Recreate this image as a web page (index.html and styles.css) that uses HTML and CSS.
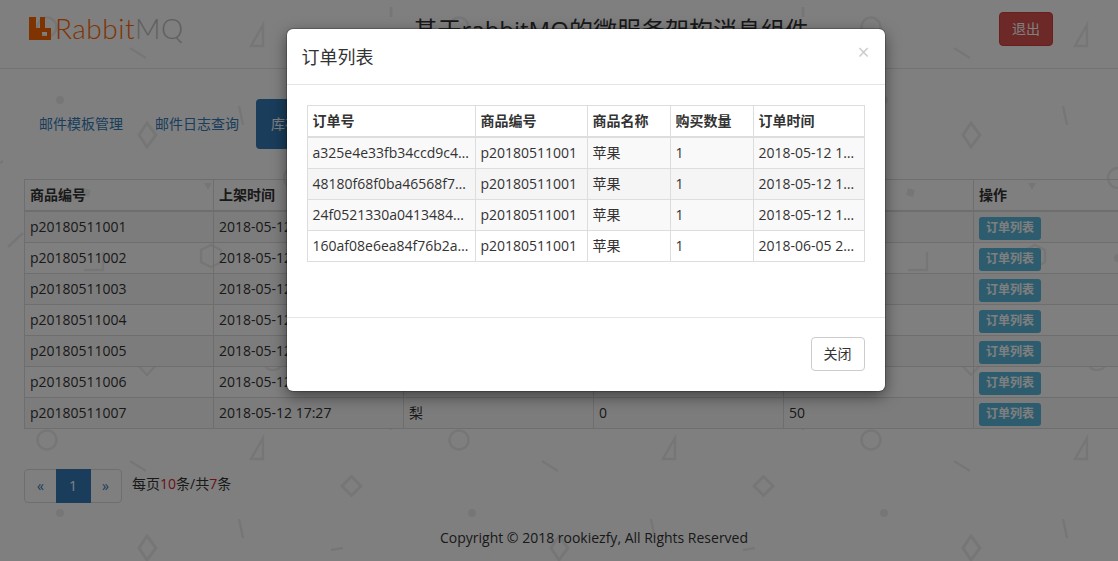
FILE: index.html
```html
<!DOCTYPE html>
<html lang="zh-CN">
<head>
<meta charset="utf-8">
<title>RabbitMQ</title>
<link rel="stylesheet" href="styles.css">
</head>
<body>
<div class="page">
  <header class="topbar">
    <div class="logo">
      <svg class="logo-mark" viewBox="0 0 22 23" width="22" height="23"><path fill-rule="evenodd" d="M0 0h7v11h4V0h5v11h6v12H0zM13 15v4h5v-4z"/></svg>
      <span class="logo-rabbit">Rabbit</span><span class="logo-mq">MQ</span>
    </div>
    <h1 class="site-title">基于rabbitMQ的微服务架构消息组件</h1>
    <button class="btn btn-danger">退出</button>
  </header>
  <main class="content">
    <ul class="pills">
      <li><a class="pill">邮件模板管理</a></li>
      <li><a class="pill">邮件日志查询</a></li>
      <li><a class="pill pill-active">库存管理</a></li>
    </ul>
    <table class="grid-table goods-table">
      <thead>
        <tr><th>商品编号</th><th>上架时间</th><th>商品名称</th><th>已售数量</th><th>库存</th><th>操作</th></tr>
      </thead>
      <tbody>
        <tr><td>p20180511001</td><td>2018-05-12 17:27</td><td>苹果</td><td>4</td><td>46</td><td class="cell-action"><a class="btn-xs">订单列表</a></td></tr>
        <tr><td>p20180511002</td><td>2018-05-12 17:27</td><td>香蕉</td><td>0</td><td>50</td><td class="cell-action"><a class="btn-xs">订单列表</a></td></tr>
        <tr><td>p20180511003</td><td>2018-05-12 17:27</td><td>橙子</td><td>0</td><td>50</td><td class="cell-action"><a class="btn-xs">订单列表</a></td></tr>
        <tr><td>p20180511004</td><td>2018-05-12 17:27</td><td>葡萄</td><td>0</td><td>50</td><td class="cell-action"><a class="btn-xs">订单列表</a></td></tr>
        <tr><td>p20180511005</td><td>2018-05-12 17:27</td><td>西瓜</td><td>0</td><td>50</td><td class="cell-action"><a class="btn-xs">订单列表</a></td></tr>
        <tr><td>p20180511006</td><td>2018-05-12 17:27</td><td>桃子</td><td>0</td><td>50</td><td class="cell-action"><a class="btn-xs">订单列表</a></td></tr>
        <tr><td>p20180511007</td><td>2018-05-12 17:27</td><td>梨</td><td>0</td><td>50</td><td class="cell-action"><a class="btn-xs">订单列表</a></td></tr>
      </tbody>
    </table>
    <div class="pager-row">
      <ul class="pager">
        <li class="pager-item pager-first">«</li>
        <li class="pager-item pager-current">1</li>
        <li class="pager-item pager-last">»</li>
      </ul>
      <span class="pager-info">每页<em>10</em>条/共<em>7</em>条</span>
    </div>
  </main>
  <footer class="footer">Copyright © 2018 rookiezfy, All Rights Reserved</footer>
</div>
<div class="backdrop"></div>
<section class="modal">
  <div class="modal-header">
    <h4 class="modal-title">订单列表</h4>
    <span class="modal-close">×</span>
  </div>
  <div class="modal-body">
    <table class="grid-table order-table">
      <thead>
        <tr><th>订单号</th><th>商品编号</th><th>商品名称</th><th>购买数量</th><th>订单时间</th></tr>
      </thead>
      <tbody>
        <tr><td>a325e4e33fb34ccd9c4e1f07ab25c6d8</td><td>p20180511001</td><td>苹果</td><td>1</td><td>2018-05-12 17:35:21</td></tr>
        <tr><td>48180f68f0ba46568f7c2d91e3ab4f60</td><td>p20180511001</td><td>苹果</td><td>1</td><td>2018-05-12 17:36:02</td></tr>
        <tr><td>24f0521330a04134845c7ea9d1b6f382</td><td>p20180511001</td><td>苹果</td><td>1</td><td>2018-05-12 17:38:44</td></tr>
        <tr><td>160af08e6ea84f76b2a93dc15e07f4b1</td><td>p20180511001</td><td>苹果</td><td>1</td><td>2018-06-05 21:10:33</td></tr>
      </tbody>
    </table>
  </div>
  <div class="modal-footer">
    <button class="btn btn-default">关闭</button>
  </div>
</section>
</body>
</html>
```
FILE: styles.css
```css
* { box-sizing: border-box; }
html, body { margin: 0; padding: 0; height: 100%; overflow: hidden; }
body {
  width: 1118px;
  height: 561px;
  position: relative;
  font: 14px/20px "Open Sans", "Noto Sans CJK SC", sans-serif;
  color: #333;
  background-color: #fff;
  background-size: 412px 413px;
  background-image: url("data:image/svg+xml,%3Csvg xmlns='http://www.w3.org/2000/svg' width='412' height='413' viewBox='0 0 412 413'%3E%3Cg fill='none' stroke='%23ededed' stroke-width='2.5'%3E%3Ccircle cx='47' cy='27' r='9.5'/%3E%3Cpath d='M263 25V46H251z'/%3E%3Cpath d='M130 48L146 58'/%3E%3Cpath d='M147 123L156 135L147 147L139 135z' stroke-width='3'/%3E%3Cpath d='M239 106L243 125'/%3E%3Cpath d='M351.5 63.500L361 73L351.500 82.500L342 73z' stroke-width='3'/%3E%3Cpath d='M331 137L343 135'/%3E%3Cpath d='M84 270H103V252'/%3E%3Cpath d='M211 245L221 250V262L211 267L201 262V250z'/%3E%3Cpath d='M8 247L23 233'/%3E%3Ccircle cx='273' cy='360' r='10'/%3E%3Cpath d='M147 350L159 362L147 375L135 362z'/%3E%3Ccircle cx='294' cy='178' r='10'/%3E%3Cpath d='M391 7V17' stroke-width='3'/%3E%3Cpath d='M0 163L3 161'/%3E%3C/g%3E%3Cg fill='%23ededed'%3E%3Ccircle cx='60' cy='100' r='4'/%3E%3Cpath d='M204 183H212L208 190z'/%3E%3Cpath d='M84 188L91 190L89 197L82 195z'/%3E%3Ccircle cx='294' cy='258' r='4'/%3E%3C/g%3E%3C/svg%3E");
}
.page { width: 1188px; }
ul { list-style: none; margin: 0; padding: 0; }

/* top bar */
.topbar {
  height: 69px;
  border-bottom: 1px solid #e7e7e7;
  display: grid;
  grid-template-columns: 384.5px 585.5px 54px;
  padding-left: 29px;
  width: 1118px;
}
.logo { display: flex; align-items: flex-start; padding-top: 17px; height: 68px; }
.logo-mark { fill: #f60; flex: none; margin-right: 4px; }
.logo-rabbit, .logo-mq {
  font: 300 28px/23px Lato, "Open Sans", sans-serif;
  letter-spacing: .5px;
}
.logo-rabbit { color: #f60; }
.logo-mq { color: #c0c0c0; }
.site-title {
  margin: 13px 0 0;
  font-size: 24px;
  line-height: 34px;
  font-weight: 400;
  white-space: nowrap;
}
.btn {
  font: inherit;
  height: 34px;
  padding: 6px 12px;
  border: 1px solid transparent;
  border-radius: 4px;
  text-align: center;
}
.topbar .btn { margin-top: 12px; }
.btn-danger { background: #d9534f; border-color: #d43f3a; color: #fff; }
.btn-default { background: #fff; border-color: #ccc; color: #333; }

/* pills */
.content { padding: 30px 0 0 24px; }
.pills { display: flex; gap: 2px; margin-bottom: 30px; }
.pill {
  display: block;
  padding: 15px;
  border-radius: 4px;
  color: #337ab7;
}
.pill-active { background: #337ab7; color: #fff; }

/* tables */
.grid-table { border-collapse: collapse; table-layout: fixed; }
.grid-table th, .grid-table td {
  border: 1px solid #ddd;
  padding: 5px;
  text-align: left;
  white-space: nowrap;
  overflow: hidden;
  text-overflow: ellipsis;
}
.grid-table th { border-bottom-width: 2px; font-weight: 700; }
.goods-table { width: 1140px; }
.goods-table th:first-child { width: 189px; }
.goods-table th { width: 190px; }
.goods-table tbody tr:nth-child(odd) { background: #f9f9f9; }
.goods-table .cell-action { padding: 5px 5px 2px; }
.btn-xs {
  display: block;
  width: 62px;
  height: 23px;
  border-radius: 3px;
  background: #5bb9dc;
  color: #fff;
  font-size: 12px;
  font-weight: 700;
  line-height: 21px;
  text-align: center;
}

/* pager */
.pager-row { display: flex; align-items: flex-start; gap: 10px; margin-top: 40px; }
.pager { display: flex; }
.pager-item {
  height: 34px;
  padding: 6px 12px;
  border: 1px solid #ddd;
  background: #fff;
  color: #337ab7;
  margin-left: -1px;
}
.pager-first { margin-left: 0; border-radius: 4px 0 0 4px; width: 33px; }
.pager-current { background: #337ab7; border-color: #337ab7; color: #fff; width: 35px; position: relative; }
.pager-last { border-radius: 0 4px 4px 0; width: 32px; padding-left: 11px; }
.pager-info { margin-top: 5px; }
.pager-info em { font-style: normal; color: #d9232e; }

.footer { margin-top: 25px; text-align: center; }

/* modal */
.backdrop { position: absolute; inset: 0; background: rgba(0, 0, 0, .5); }
.modal {
  position: absolute;
  left: 286.5px;
  top: 29px;
  width: 598px;
  background: #fff;
  border-radius: 6px;
  box-shadow: 0 0 0 1px rgba(0, 0, 0, .2), 0 5px 15px rgba(0, 0, 0, .5);
}
.modal-header {
  display: flex;
  justify-content: space-between;
  padding: 15px;
  height: 56px;
  border-bottom: 1px solid #e5e5e5;
}
.modal-title { margin: 0; font-size: 18px; line-height: 26px; font-weight: 400; }
.modal-close {
  margin-top: -2px;
  font: 400 21px/21px "Open Sans", sans-serif;
  color: #000;
  opacity: .2;
}
.modal-body { padding: 20px 20px 55px; }
.order-table { width: 557.5px; }
.order-table th:nth-child(1) { width: 168px; }
.order-table th:nth-child(2) { width: 112px; }
.order-table th:nth-child(3), .order-table th:nth-child(4) { width: 83px; }
.order-table th:nth-child(5) { width: 111.5px; }
.order-table tbody tr:nth-child(1), .order-table tbody tr:nth-child(3) { background: #f9f9f9; }
.order-table tbody tr:nth-child(2) { background: #f5f5f5; }
.modal-footer {
  display: flex;
  justify-content: flex-end;
  padding: 19px 20px 20px;
  border-top: 1px solid #e5e5e5;
}
```
